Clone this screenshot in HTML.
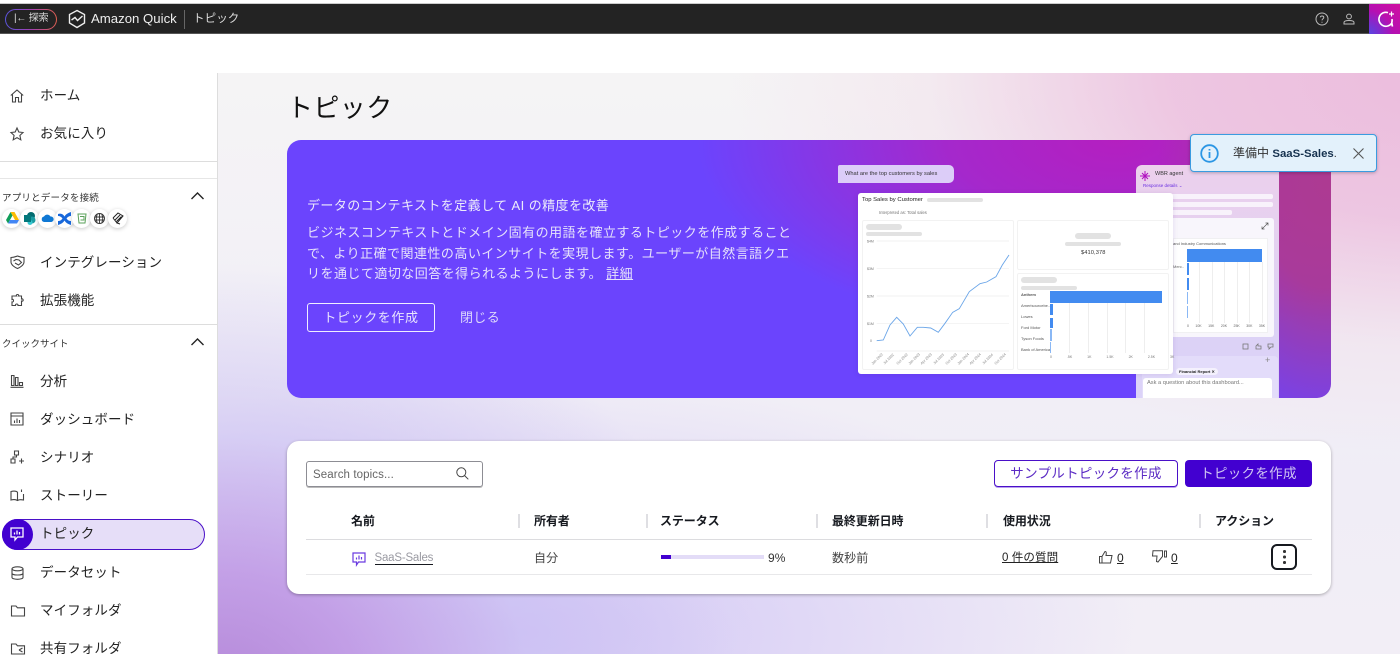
<!DOCTYPE html>
<html lang="ja"><head><meta charset="utf-8"><style>
*{box-sizing:border-box}
html,body{margin:0;padding:0}
body{width:1400px;height:654px;overflow:hidden;position:relative;background:#fff;font-family:"Liberation Sans","Noto Sans CJK JP",sans-serif;color:#16191f}
.a{position:absolute;white-space:nowrap}
svg{position:absolute;overflow:visible}
.ni{font-size:13.5px;left:40px;line-height:20px;color:#222;letter-spacing:.1px}
.ic{fill:none;stroke:#444;stroke-width:1.1}
.th{font-size:12px;font-weight:700;line-height:16px;letter-spacing:-.1px;color:#16191f}
.td{font-size:12px;line-height:16px;color:#444;letter-spacing:.1px}
.sep{position:absolute;width:2px;height:14px;top:514px;background:#dfdfe3}
.bar{position:absolute;background:#e2e2e2;border-radius:3px}
.t{position:absolute;white-space:nowrap;font-size:5px;color:#666}
.d{position:absolute;white-space:nowrap;font-size:3.6px;color:#888;top:357px;transform:rotate(-45deg)}
.l{position:absolute;white-space:nowrap;left:1021px;font-size:4px;color:#555;line-height:6px}
.c{position:absolute;width:19px;height:19px;top:209px;border-radius:50%;background:#fff;box-shadow:0 1px 4px rgba(0,0,0,.22)}
</style></head><body>
<!-- top bar -->
<div class="a" style="left:0;top:3px;width:1400px;height:1px;background:#ccc"></div>
<div class="a" style="left:0;top:4px;width:1400px;height:30px;background:#232323;border-bottom:1px solid #555"></div>
<div class="a" style="left:5px;top:9px;width:52px;height:21px;border-radius:11px;background:linear-gradient(90deg,#5a55e0,#a040b0,#e06050);padding:1px"><div style="width:100%;height:100%;background:#232323;border-radius:10px"></div></div>
<div class="a" style="left:14px;top:12px;color:#ddd;font-size:10px;line-height:14px;letter-spacing:-.2px">|← 探索</div>
<svg style="left:67px;top:9px" width="20" height="20" viewBox="0 0 20 20" fill="none" stroke="#eee" stroke-width="1.4"><path d="M10 1.500 17.500 5.500V14L10 18.500 2.500 14V5.500Z"/><path d="M4.500 11 8 8.500 10.500 11.500 15.500 7"/></svg>
<div class="a" style="left:91px;top:10px;color:#eee;font-size:13.200px;line-height:18px">Amazon Quick</div>
<div class="a" style="left:184px;top:10px;width:1px;height:19px;background:#666"></div>
<div class="a" style="left:193px;top:11px;color:#ddd;font-size:11.500px;line-height:16px;letter-spacing:.1px">トピック</div>
<svg style="left:1315px;top:12px" width="14" height="14" viewBox="0 0 14 14" fill="none" stroke="#bbb" stroke-width="1"><circle cx="7" cy="7" r="6"/><path d="M5.300 5.400C5.300 3.400 8.800 3.600 8.800 5.500 8.800 6.800 7 6.800 7 8.400"/><path d="M7 9.800v1"/></svg>
<svg style="left:1343px;top:13px" width="12" height="12" viewBox="0 0 12 12" fill="none" stroke="#bbb" stroke-width="1"><circle cx="6" cy="3.500" r="2.400"/><path d="M1 11V9.500C1 8 3 7.500 6 7.500S11 8 11 9.500V11Z"/></svg>
<div class="a" style="left:1369px;top:4px;width:31px;height:30px;background:radial-gradient(circle at 0 100%,#5a45e0 0,transparent 55%),linear-gradient(45deg,#a010c0,#d010a0)"></div>
<svg style="left:1376px;top:10px" width="20" height="20" viewBox="0 0 20 20" fill="none" stroke="#fff" stroke-width="1.600"><path d="M12 2.600A7 7 0 1 0 15.500 13.500L16.500 16.500 15.800 12.500A7 7 0 0 0 16 9"/><path d="M15.500 1.500v5M13 4h5" stroke-width="1.200"/></svg>

<!-- main bg -->
<div class="a" style="left:217px;top:73px;width:1183px;height:581px;background:
radial-gradient(ellipse 720px 380px at 1230px 0,#ecbcdd 0,rgba(236,190,222,.85) 38%,rgba(240,215,230,.35) 72%,rgba(240,215,230,0) 100%),
radial-gradient(ellipse 520px 430px at 0 620px,#b487d8 0,rgba(190,150,228,.85) 28%,rgba(203,192,243,.65) 60%,rgba(203,192,243,0) 100%),
radial-gradient(ellipse 620px 260px at 300px 560px,rgba(203,190,245,.85) 0,rgba(203,190,245,0) 100%),
linear-gradient(180deg,#f5f4f5 0,#f2f0f6 40%,#f0edf6 70%,#f2eef6 100%)"></div>
<div class="a" style="left:217px;top:73px;width:1px;height:581px;background:#ddd"></div>

<!-- sidebar -->
<svg class="ic" style="left:10px;top:89px" width="14" height="14" viewBox="0 0 14 14"><path d="M.8 6.500 7 1 13.200 6.500M2.500 5.500V13H5.500V8.500H8.500V13H11.500V5.500"/></svg>
<div class="a ni" style="top:86px">ホーム</div>
<svg class="ic" style="left:10px;top:127px" width="14" height="14" viewBox="0 0 14 14"><path d="M7 1 8.800 5 13 5.500 9.900 8.400 10.800 12.800 7 10.600 3.200 12.800 4.100 8.400 1 5.500 5.200 5Z"/></svg>
<div class="a ni" style="top:124px">お気に入り</div>
<div class="a" style="left:0;top:161px;width:217px;height:1px;background:#ddd"></div>
<div class="a" style="left:0;top:178px;width:217px;height:1px;background:#e6e6e6"></div>
<div class="a" style="left:2px;top:192px;font-size:9.500px;line-height:14px;color:#333;letter-spacing:.2px">アプリとデータを接続</div>
<svg style="left:191px;top:192px" width="13" height="8" viewBox="0 0 13 8" fill="none" stroke="#222" stroke-width="1.400"><path d="M.5 7 6.500 1 12.500 7"/></svg>
<div class="c" style="left:2px"></div><div class="c" style="left:20px"></div><div class="c" style="left:38px"></div><div class="c" style="left:55px"></div><div class="c" style="left:72px"></div><div class="c" style="left:90px"></div><div class="c" style="left:108px"></div>
<svg style="left:6px;top:212px" width="13" height="12" viewBox="0 0 13 12"><path d="M4.500 0H8.500L13 8H9Z" fill="#fbbc04"/><path d="M4.500 0 0 8 2 11.500 6.500 3.500Z" fill="#0f9d58"/><path d="M2 11.500H11L13 8H4Z" fill="#4285f4"/></svg>
<svg style="left:24px;top:212px" width="12" height="13" viewBox="0 0 12 13"><circle cx="7" cy="4" r="4" fill="#036c70"/><circle cx="8" cy="8" r="3.500" fill="#1a9ba1"/><circle cx="6" cy="10.500" r="2.500" fill="#37c6d0"/><rect x="0" y="3" width="7" height="7" fill="#03787c"/></svg>
<svg style="left:41px;top:214px" width="13" height="8" viewBox="0 0 13 8"><path d="M3 8A2.800 2.800 0 0 1 3 2.500 3.800 3.800 0 0 1 9.500 2.500 2.800 2.800 0 0 1 10.500 8Z" fill="#0f78d4"/></svg>
<svg style="left:58px;top:212px" width="13" height="13" viewBox="0 0 13 13" fill="#1868db"><path d="M0 2C3 1 5 2 6.500 4.500 8 2 10 1 13 0V4C11 4 9.500 5 8.500 6.500 9.500 8 11 9 13 9V13C10 12 8 11 6.500 8.500 5 11 3 12 0 13V9C2 9 3.500 8 4.500 6.500 3.500 5 2 4 0 4Z"/></svg>
<svg style="left:77px;top:213px" width="10" height="11" viewBox="0 0 10 11" fill="none" stroke="#5aa05a"><path d="M1 1H9L8 10H2Z"/><path d="M3 3.500H7V7H3.500"/></svg>
<svg style="left:94px;top:213px" width="11" height="11" viewBox="0 0 11 11" fill="none" stroke="#333" stroke-width=".9"><circle cx="5.500" cy="5.500" r="5"/><path d="M.5 4H10.500M.5 7H10.500M5.500 .5V10.500M3.200 1.500C2 4 2 7 3.200 9.500M7.800 1.500C9 4 9 7 7.800 9.500"/></svg>
<svg style="left:112px;top:212px" width="12" height="13" viewBox="0 0 12 13" fill="none" stroke="#222" stroke-width="1"><path d="M1 6 6 1 11 4 5 11 8 12M3 8 8 3M4.500 9.500 9.500 4.500M1 6 5 11"/></svg>

<svg class="ic" style="left:10px;top:255px" width="15" height="14" viewBox="0 0 15 14"><path d="M1 2.500C4 2.500 6 1.500 7.500 1 9 1.500 11 2.500 14 2.500V7C14 10 10 12.500 7.500 13.500 5 12.500 1 10 1 7Z"/><path d="M3.500 6 6 4.500 9 5 11.500 7.500 8.500 10 5 8"/></svg>
<div class="a ni" style="top:253px">インテグレーション</div>
<svg class="ic" style="left:10px;top:293px" width="15" height="14" viewBox="0 0 15 14"><path d="M5 3H6.500C5.500 1 9.500 1 8.500 3H11.500V6C13.500 5 14 9 11.500 8V12.500H8C8.500 10.500 5 10.500 5.500 12.500H2V9C4 9.500 4 5.500 2 6.500V3Z"/></svg>
<div class="a ni" style="top:291px">拡張機能</div>
<div class="a" style="left:0;top:324px;width:217px;height:1px;background:#ddd"></div>
<div class="a" style="left:2px;top:338px;font-size:9.500px;line-height:14px;color:#333;letter-spacing:0">クイックサイト</div>
<svg style="left:191px;top:338px" width="13" height="8" viewBox="0 0 13 8" fill="none" stroke="#222" stroke-width="1.400"><path d="M.5 7 6.500 1 12.500 7"/></svg>
<svg class="ic" style="left:10px;top:374px" width="14" height="14" viewBox="0 0 14 14"><path d="M1.500 1.500H4V11.500H1.500ZM5.500 3.500H8V11.500H5.500ZM9.500 8.500H12.500V11.500H9.500ZM.5 13.300H13.500"/></svg>
<div class="a ni" style="top:372px">分析</div>
<svg class="ic" style="left:10px;top:412px" width="14" height="14" viewBox="0 0 14 14"><path d="M1 1H13V13H1ZM1 4H13M4.500 11V8.500M7 11V6.500M9.500 11V8"/></svg>
<div class="a ni" style="top:410px">ダッシュボード</div>
<svg class="ic" style="left:10px;top:450px" width="14" height="14" viewBox="0 0 14 14"><path d="M4.500 1H8.500V5H4.500ZM1 9H5V13H1ZM6.500 5V7H3V9M9 11H14M11.500 8.500V13.500"/></svg>
<div class="a ni" style="top:448px">シナリオ</div>
<svg class="ic" style="left:10px;top:488px" width="15" height="14" viewBox="0 0 15 14"><path d="M7.500 4C6 3 3 3 1 3.500V12C3 11.500 6 11.500 7.500 12.500 9 11.500 11 11.500 13.500 12V6M7.500 4V12.500M11.500 1.500V4"/></svg>
<div class="a ni" style="top:486px">ストーリー</div>
<div class="a" style="left:2px;top:519px;width:203px;height:31px;border-radius:16px;background:#e6def8;border:1px solid #4a10c8"></div>
<div class="a" style="left:2px;top:519px;width:31px;height:31px;border-radius:50%;background:#4200d0"></div>
<svg style="left:10px;top:527px" width="14" height="15" viewBox="0 0 14 15" fill="none" stroke="#fff" stroke-width="1.300"><path d="M1 1H13V10H7.500L5 13V10H1Z"/><path d="M4.500 7.500V5.500M7 7.500V3.500M9.500 7.500V5"/></svg>
<div class="a ni" style="top:524px;color:#222">トピック</div>
<svg class="ic" style="left:11px;top:566px" width="13" height="14" viewBox="0 0 13 14"><ellipse cx="6.500" cy="2.800" rx="5.500" ry="2"/><path d="M1 2.800V11.500C1 12.500 3.500 13.300 6.500 13.300S12 12.500 12 11.500V2.800M1 7.200C1 8.300 3.500 9 6.500 9S12 8.300 12 7.200"/></svg>
<div class="a ni" style="top:563px">データセット</div>
<svg class="ic" style="left:11px;top:605px" width="14" height="12" viewBox="0 0 14 12"><path d="M.5 1H5L6.500 2.800H13.500V11H.5Z"/></svg>
<div class="a ni" style="top:601px">マイフォルダ</div>
<svg class="ic" style="left:11px;top:643px" width="14" height="12" viewBox="0 0 14 12"><path d="M.5 1H5L6.500 2.800H13.500V11H.5Z"/><path d="M8 7 11.500 5M8 7 11.500 9"/></svg>
<div class="a ni" style="top:639px">共有フォルダ</div>

<!-- title -->
<div class="a" style="left:287px;top:90px;font-size:26px;line-height:36px;color:#111;letter-spacing:.4px">トピック</div>

<!-- banner -->
<div class="a" style="left:287px;top:140px;width:1044px;height:258px;border-radius:14px;overflow:hidden;background:
radial-gradient(ellipse 170px 270px at 1040px 40px,#ad3a92 0,rgba(173,58,146,.9) 40%,rgba(150,60,190,0) 100%),
radial-gradient(ellipse 420px 200px at 830px 0,#b41fc0 0,rgba(175,35,195,.85) 40%,rgba(106,64,251,0) 100%),
#6b44fd"></div>
<div class="a" style="left:307px;top:196px;font-size:13px;line-height:20px;color:#ecebfb;letter-spacing:.42px">データのコンテキストを定義して AI の精度を改善</div>
<div class="a" style="left:307px;top:223px;font-size:13px;line-height:20.500px;color:#e6e2fb;letter-spacing:.47px">ビジネスコンテキストとドメイン固有の用語を確立するトピックを作成すること<br>で、より正確で関連性の高いインサイトを実現します。ユーザーが自然言語クエ<br>リを通じて適切な回答を得られるようにします。 <span style="text-decoration:underline">詳細</span></div>
<div class="a" style="left:307px;top:303px;width:128px;height:29px;border:1px solid #f0eeff;border-radius:3px;font-size:13px;line-height:27px;text-align:center;color:#e8e4fd;letter-spacing:.6px">トピックを作成</div>
<div class="a" style="left:460px;top:308px;font-size:13px;line-height:19px;color:#ddd8fb;letter-spacing:.35px">閉じる</div>

<!-- right panel illustration -->
<div class="a" style="left:1136px;top:165px;width:143px;height:233px;border-radius:6px 6px 0 0;background:linear-gradient(180deg,#ecd0ec,#dcd2f6 70%,#dcd3f8);overflow:hidden">
<svg style="left:4px;top:6px" width="10" height="10" viewBox="0 0 10 10" fill="none" stroke="#b010c0" stroke-width="1"><path d="M5 0V10M0 5H10M2 2 8 8M8 2 2 8"/></svg>
<div class="t" style="left:19px;top:6px;color:#333;font-size:5.500px">WBR agent</div>
<div class="t" style="left:7px;top:18px;color:#6a30e0;font-size:4.500px">Response details ⌄</div>
<div class="a" style="left:30px;top:29px;width:107px;height:5px;border-radius:2px;background:#f8f2fb"></div>
<div class="a" style="left:30px;top:37px;width:107px;height:5px;border-radius:2px;background:#f8f2fb"></div>
<div class="a" style="left:30px;top:45px;width:66px;height:5px;border-radius:2px;background:#f8f2fb"></div>
<div class="a" style="left:30px;top:53px;width:108px;height:119px;background:#f8f6fc;border-radius:3px"></div>
<div class="a" style="left:37px;top:73px;width:95px;height:95px;background:#fff;border:1px solid #f0f0f2"></div>
<div class="t" style="left:37px;top:76px;font-size:4px;color:#555">and Industry Communications</div>
<div class="t" style="left:37px;top:99px;font-size:4px">Merc..</div>
<div class="a" style="left:51px;top:84px;width:75px;height:13px;background:#428bf0"></div>
<div class="a" style="left:51px;top:98px;width:2px;height:12px;background:#428bf0"></div>
<div class="a" style="left:51px;top:113px;width:2px;height:12px;background:#428bf0"></div>
<div class="a" style="left:51px;top:127px;width:1px;height:12px;background:#8ab8f5"></div>
<div class="a" style="left:51px;top:141px;width:1px;height:12px;background:#8ab8f5"></div>
<div class="a" style="left:63px;top:97px;width:1px;height:61px;background:#eee;box-shadow:13px 0 #eee,25px 0 #eee,38px 0 #eee,50px 0 #eee,63px 0 #eee"></div>
<div class="t" style="left:51px;top:159px;font-size:3.500px;word-spacing:5.500px">0 10K 15K 20K 25K 30K 35K</div>
<svg style="left:106px;top:178px" width="32" height="7" viewBox="0 0 32 7" fill="none" stroke="#777" stroke-width=".8"><rect x="1" y="1" width="5" height="5"/><path d="M14 6V3L16 1V3H19V6ZM26 1H31V4H29L27 6V4H26Z"/></svg>
<div class="a" style="left:6px;top:191px;width:136px;height:42px;background:#e3dcfa;border-radius:4px 4px 0 0"></div>
<div class="t" style="left:40px;top:203px;background:#f4f1fd;border-radius:4px;padding:0 3px;font-size:4px;color:#222;font-weight:700;line-height:7px">Financial Report ✕</div>
<div class="t" style="left:129px;top:190px;font-size:9px;color:#888">+</div>
<div class="a" style="left:7px;top:213px;width:129px;height:20px;background:#fff;border-radius:3px 3px 0 0"></div>
<div class="t" style="left:11px;top:215px;font-size:5.700px;color:#777;letter-spacing:0">Ask a question about this dashboard...</div>
</div>
<svg style="left:1262px;top:223px" width="6" height="6" viewBox="0 0 6 6" fill="none" stroke="#555" stroke-width=".7"><path d="M0 6 6 0M3.500 0H6V2.500M0 3.500V6H2.500"/></svg>

<!-- question bubble -->
<div class="a" style="left:838px;top:165px;width:116px;height:18px;background:#dccdf8;border-radius:2px 5px 5px 0"></div>
<div class="t" style="left:845px;top:170px;font-size:5.700px;color:#333;line-height:8px">What are the top customers by sales</div>

<!-- white chart card -->
<div class="a" style="left:858px;top:193px;width:315px;height:181px;background:#fff;border-radius:3px;box-shadow:0 1px 6px rgba(60,0,120,.12)"></div>
<div class="t" style="left:862px;top:196px;font-size:5.900px;color:#222;line-height:9px">Top Sales by Customer</div>
<div class="bar" style="left:927px;top:198px;width:56px;height:4px"></div>
<div class="t" style="left:879px;top:210px;font-size:4.200px;color:#777;line-height:6px">Interpreted as: Total sales</div>
<div class="a" style="left:862px;top:220px;width:152px;height:150px;border:1px solid #f2f2f2;border-radius:2px"></div>
<div class="a" style="left:1017px;top:220px;width:152px;height:50px;border:1px solid #f2f2f2;border-radius:2px"></div>
<div class="a" style="left:1017px;top:273px;width:152px;height:97px;border:1px solid #f2f2f2;border-radius:2px"></div>
<div class="bar" style="left:866px;top:224px;width:36px;height:6px"></div>
<div class="bar" style="left:866px;top:232px;width:56px;height:4px"></div>
<svg style="left:858px;top:193px" width="155" height="175" viewBox="0 0 155 175" fill="none"><path d="M18.700 48H151M18.700 75.300H151M18.700 103H151M18.700 130.300H151M18.700 158H151" stroke="#eee" stroke-width=".7"/><path d="M18.700 147.700 25.300 147 32 132 38.700 124.300 45.300 131 52 143 59.300 134.300 65.300 134.300 72.700 135 80.300 139.300 87 130.300 94.700 119.300 101.300 115.700 111.300 98.700 122 90.700 128.700 89 138 83.700 144.300 72 151 62" stroke="#6aa5e8" stroke-width=".9"/><g fill="#777" font-size="3.500" font-family="Liberation Sans"><text x="9" y="49.500">$4M</text><text x="9" y="77">$3M</text><text x="9" y="104.500">$2M</text><text x="9" y="132">$1M</text><text x="12" y="149">0</text></g></svg>
<div class="d" style="left:870px">Jan 2022</div><div class="d" style="left:882px">Jul 2022</div><div class="d" style="left:895px">Oct 2022</div><div class="d" style="left:907px">Jan 2023</div><div class="d" style="left:919px">Apr 2023</div><div class="d" style="left:932px">Jul 2023</div><div class="d" style="left:944px">Oct 2023</div><div class="d" style="left:956px">Jan 2024</div><div class="d" style="left:968px">Apr 2024</div><div class="d" style="left:981px">Jul 2024</div><div class="d" style="left:993px">Oct 2024</div>
<div class="bar" style="left:1075px;top:233px;width:36px;height:6px"></div>
<div class="bar" style="left:1065px;top:242px;width:56px;height:4px"></div>
<div class="t" style="left:1081px;top:249px;font-size:5.700px;color:#333;line-height:8px;letter-spacing:.1px">$410,378</div>
<div class="bar" style="left:1021px;top:277px;width:36px;height:6px"></div>
<div class="bar" style="left:1021px;top:286px;width:56px;height:4px"></div>
<div class="a" style="left:1069px;top:303px;width:1px;height:50px;background:#eee;box-shadow:19px 0 #eee,38px 0 #eee,56px 0 #eee,75px 0 #eee"></div>
<div class="a" style="left:1050px;top:291px;width:112px;height:12px;background:#428bf0"></div>
<div class="a" style="left:1050px;top:304px;width:3px;height:11px;background:#428bf0"></div>
<div class="a" style="left:1050px;top:318px;width:3px;height:10px;background:#428bf0"></div>
<div class="a" style="left:1050px;top:329px;width:2px;height:12px;background:#8ab8f5"></div>
<div class="a" style="left:1050px;top:342px;width:1px;height:11px;background:#8ab8f5"></div>
<div class="l" style="top:292px;font-weight:700">Anthem</div>
<div class="l" style="top:303px">Amerisourcebe..</div>
<div class="l" style="top:314px">Lowes</div>
<div class="l" style="top:325px">Ford Motor</div>
<div class="l" style="top:336px">Tyson Foods</div>
<div class="l" style="top:347px">Bank of America</div>
<div class="t" style="left:1050px;top:355px;font-size:3.500px;color:#777;word-spacing:14px">0 .5K 1K 1.5K 2K 2.5K 3K</div>

<!-- flash -->
<div class="a" style="left:1190px;top:134px;width:187px;height:38px;background:#e3f1fb;border:1px solid #3a9be0;border-radius:4px;box-shadow:0 1px 3px rgba(0,0,0,.25)"></div>
<svg style="left:1200px;top:144px" width="19" height="19" viewBox="0 0 19 19" fill="none" stroke="#2b96e4" stroke-width="1.800"><circle cx="9.500" cy="9.500" r="8.300"/><path d="M9.500 8V14M9.500 5V6.500"/></svg>
<div class="a" style="left:1233px;top:145px;font-size:12px;line-height:17px;color:#333">準備中 <b style="color:#16324f;font-size:11.400px">SaaS-Sales</b><span style="font-size:11px">.</span></div>
<svg style="left:1353px;top:148px" width="11" height="11" viewBox="0 0 11 11" fill="none" stroke="#555" stroke-width="1.100"><path d="M.5 .5 10.500 10.500M10.500 .5 .5 10.500"/></svg>

<!-- table card -->
<div class="a" style="left:287px;top:441px;width:1044px;height:153px;background:#fff;border-radius:12px;box-shadow:0 1px 3px rgba(0,0,0,.3)"></div>
<div class="a" style="left:306px;top:461px;width:177px;height:26px;border:1px solid #8d8d94;border-radius:3px;box-shadow:0 1px 0 #bbb"></div>
<div class="a" style="left:313px;top:467px;font-size:11.500px;line-height:16px;color:#666;letter-spacing:.1px">Search topics...</div>
<svg style="left:456px;top:467px" width="13" height="13" viewBox="0 0 13 13" fill="none" stroke="#444" stroke-width="1"><circle cx="5.300" cy="5.300" r="4.500"/><path d="M8.500 8.500 12.300 12.300"/></svg>
<div class="a" style="left:994px;top:460px;width:184px;height:27px;border:1px solid #4a10c8;border-radius:4px;box-shadow:0 1px 0 #b9a0f0;font-size:13.500px;line-height:25px;text-align:center;color:#5b2bc4;letter-spacing:.3px">サンプルトピックを作成</div>
<div class="a" style="left:1185px;top:460px;width:127px;height:27px;background:#4200d0;border-radius:4px;font-size:13.500px;line-height:27px;text-align:center;color:#cfc4f2;letter-spacing:.3px">トピックを作成</div>

<div class="a th" style="left:351px;top:513px">名前</div>
<div class="sep" style="left:518px"></div>
<div class="a th" style="left:534px;top:513px">所有者</div>
<div class="sep" style="left:646px"></div>
<div class="a th" style="left:660px;top:513px">ステータス</div>
<div class="sep" style="left:816px"></div>
<div class="a th" style="left:832px;top:513px">最終更新日時</div>
<div class="sep" style="left:986px"></div>
<div class="a th" style="left:1003px;top:513px">使用状況</div>
<div class="sep" style="left:1199px"></div>
<div class="a th" style="left:1215px;top:513px">アクション</div>
<div class="a" style="left:306px;top:539px;width:1006px;height:1px;background:#dcdcdf"></div>
<div class="a" style="left:306px;top:574px;width:1006px;height:1px;background:#e8e8ea"></div>

<svg style="left:352px;top:552px" width="14" height="15" viewBox="0 0 14 15" fill="none" stroke="#6a3be0" stroke-width="1.200"><path d="M1 1H13V10H6.500L4.500 13V10H1Z"/><path d="M4.500 7.500V5.500M7 7.500V3.500M9.500 7.500V5"/></svg>
<div class="a" style="left:374.500px;top:550px;font-size:11.500px;line-height:16px;color:#9a9aa2;letter-spacing:-.2px;border-bottom:1px solid #16191f;height:15px">SaaS-Sales</div>
<div class="a td" style="left:534px;top:550px">自分</div>
<div class="a" style="left:661px;top:555px;width:103px;height:4px;background:#e3dcf7"></div>
<div class="a" style="left:661px;top:555px;width:10px;height:4px;background:#4200d0"></div>
<div class="a td" style="left:768px;top:550px;color:#333">9%</div>
<div class="a td" style="left:832px;top:550px">数秒前</div>
<div class="a td" style="left:1002px;top:550px;color:#222;text-decoration:underline;letter-spacing:.1px;font-size:11.500px">0 件の質問</div>
<svg style="left:1099px;top:550px" width="14" height="14" viewBox="0 0 14 14" fill="none" stroke="#444" stroke-width="1"><path d="M.5 6.500H3V13H.5ZM3 6.500 6 1.500C7.500 1.500 7.500 3 7 5.500H13L11.500 13H3"/></svg>
<div class="a td" style="left:1117px;top:550px;color:#222;text-decoration:underline">0</div>
<svg style="left:1152px;top:550px" width="15" height="13" viewBox="0 0 15 13" fill="none" stroke="#444" stroke-width="1"><path d="M12.500 1H14.500V7H12.500ZM10.500 .8H1L.5 6H5L4.500 11.500 6 12 10.500 6.500Z"/></svg>
<div class="a td" style="left:1171px;top:550px;color:#222;text-decoration:underline">0</div>
<div class="a" style="left:1271px;top:544px;width:26px;height:26px;border:2px solid #16191f;border-radius:6px"></div>
<div class="a" style="left:1283px;top:550px;width:2.500px;height:2.500px;border-radius:50%;background:#333;box-shadow:0 5.500px #333,0 11px #333"></div>
</body></html>
